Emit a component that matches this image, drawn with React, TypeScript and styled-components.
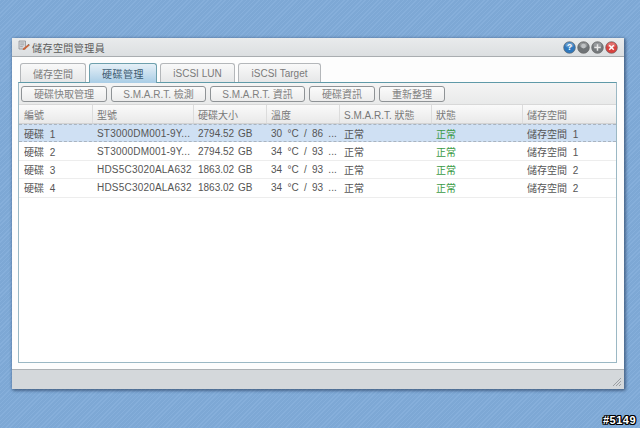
import type { ReactNode } from 'react';
import styled, { createGlobalStyle } from 'styled-components';

const GlobalStyle = createGlobalStyle`
  html, body {
    margin: 0;
    padding: 0;
    height: 100%;
  }

  body {
    font-family: "Liberation Sans", "Noto Sans CJK TC", sans-serif;
    overflow: hidden;
  }
`;

const Desktop = styled.div`
  position: relative;
  box-sizing: border-box;
  width: 640px;
  height: 428px;
  padding: 38px 16px 39px 12px;
  background-color: #80abd9;
  background-image: repeating-linear-gradient(
    135deg,
    rgba(255, 255, 255, 0.05) 0,
    rgba(255, 255, 255, 0.05) 1px,
    rgba(0, 0, 0, 0.02) 1px,
    rgba(0, 0, 0, 0.02) 3px
  );
`;

const Window = styled.div`
  display: flex;
  flex-direction: column;
  height: 100%;
  background: #fff;
  border-radius: 2px;
  box-shadow: 1px 1px 3px 1px rgba(30, 50, 80, 0.55);
`;

const TitleBar = styled.div`
  display: flex;
  align-items: center;
  justify-content: space-between;
  box-sizing: border-box;
  height: 19px;
  padding: 0 6px;
  background: linear-gradient(#e9ebec, #dcdfe1);
  border-bottom: 1px solid #a9adb0;
`;

const Title = styled.div`
  display: flex;
  align-items: flex-start;
  gap: 2px;
  font-size: 10px;
  line-height: 13px;
  letter-spacing: 0.45px;
  color: #5a5a5a;

  span {
    padding-top: 2px;
  }
`;

const WindowButtons = styled.div`
  display: flex;
  gap: 1px;
`;

const Body = styled.div`
  flex: 1;
  min-height: 0;
  display: flex;
  flex-direction: column;
  padding: 6px 7px 6px 6px;
  background: #fdfdfd;
`;

const Tabs = styled.div`
  display: flex;
  gap: 3px;
  height: 19px;
  padding-left: 2px;
`;

const Tab = styled.div<{ $active?: boolean; $width: number }>`
  box-sizing: border-box;
  width: ${p => p.$width}px;
  height: ${p => (p.$active ? 20 : 19)}px;
  display: flex;
  align-items: center;
  justify-content: center;
  font-size: 10px;
  letter-spacing: ${p => (p.$active ? 0.5 : 0)}px;
  color: ${p => (p.$active ? '#3c5a70' : '#7a7a7a')};
  background: ${p =>
    p.$active
      ? 'linear-gradient(#e6f0f7, #a9cde6)'
      : 'linear-gradient(#f9f9f9, #e6e7e8)'};
  border: 1px solid ${p => (p.$active ? '#6ea0ad' : '#b4b7ba')};
  border-bottom: none;
  border-radius: 3px 3px 0 0;
  z-index: ${p => (p.$active ? 1 : 0)};
`;

const Panel = styled.div`
  flex: 1;
  min-height: 0;
  display: flex;
  flex-direction: column;
  background: #fff;
  border: 1px solid #9bb8c4;
  border-top-color: #5f9aa8;
`;

const Toolbar = styled.div`
  display: flex;
  align-items: center;
  gap: 4px;
  box-sizing: border-box;
  height: 22px;
  padding: 0 2px;
  background: linear-gradient(#f4f4f4, #e9eaea);
  border-bottom: 1px solid #d8d8d8;
`;

const ToolButton = styled.div<{ $width: number }>`
  box-sizing: border-box;
  width: ${p => p.$width}px;
  height: 16px;
  display: flex;
  align-items: center;
  justify-content: center;
  font-size: 10px;
  color: #808080;
  background: linear-gradient(#fbfbfb, #ececec);
  border: 1px solid #8f9396;
  border-radius: 3px;
  white-space: nowrap;
`;

const columns = '73px 101px 73px 73px 92px 91px 1fr';

const HeaderRow = styled.div`
  display: grid;
  grid-template-columns: ${columns};
  height: 19px;
  background: linear-gradient(#fafafa, #e9e9e9);
  border-bottom: 1px solid #d2d2d2;
  box-sizing: border-box;
`;

const HeaderCell = styled.div`
  display: flex;
  align-items: center;
  padding-left: 4px;
  font-size: 10px;
  color: #777;
  border-left: 1px solid #dcdcdc;
  white-space: nowrap;

  &:first-child {
    border-left: none;
    padding-left: 5px;
  }
`;

const Row = styled.div<{ $selected?: boolean }>`
  display: grid;
  grid-template-columns: ${columns};
  box-sizing: border-box;
  height: 18.4px;
  background: ${p => (p.$selected ? '#cfe0f3' : '#fff')};
  border-bottom: 1px ${p => (p.$selected ? 'dashed #a9b4c0' : 'solid #ededed')};
  border-top: ${p => (p.$selected ? '1px dashed #a9b4c0' : 'none')};
`;

const Cell = styled.div<{ $ok?: boolean; $wordGap: number; $tracking: number }>`
  display: flex;
  align-items: center;
  padding-left: 5px;
  font-size: 10px;
  letter-spacing: ${p => p.$tracking}px;
  word-spacing: ${p => p.$wordGap}px;
  color: ${p => (p.$ok ? '#3a9a44' : '#555')};
  white-space: pre;
  overflow: hidden;
`;

const Footer = styled.div`
  position: relative;
  height: 20px;
  background: #d4d8db;
  border-top: 1px solid #aeb2b5;
  box-sizing: border-box;
`;

const Grip = styled.svg`
  position: absolute;
  right: 2px;
  bottom: 2px;
`;

const Watermark = styled.div`
  position: absolute;
  right: 4px;
  bottom: 2px;
  font-size: 11px;
  font-weight: bold;
  letter-spacing: 0.5px;
  color: #fff;
  text-shadow:
    1px 0 0 #000,
    -1px 0 0 #000,
    0 1px 0 #000,
    0 -1px 0 #000,
    1px 1px 0 #000,
    -1px -1px 0 #000,
    1px -1px 0 #000,
    -1px 1px 0 #000;
`;

function AppIcon() {
  return (
    <svg width="12" height="11" viewBox="0 0 12 11">
      <path d="M1 1h6.5v8H1z" fill="#d5d8dc" stroke="#85888d" strokeWidth="0.7" />
      <path d="M2.2 3h4M2.2 4.8h4M2.2 6.6h2.6" stroke="#8f9297" strokeWidth="0.7" />
      <path d="M5 8.4l5-3.9 1.2 1.2-4.6 4-1.9.3z" fill="#c8643a" />
      <path d="M10 4.5l.7-.5 1 1-.5.7z" fill="#6d4028" />
    </svg>
  );
}

function CircleButton({ fill, children }: { fill: string; children: ReactNode }) {
  return (
    <svg width="13" height="13" viewBox="0 0 14 14">
      <circle cx="7" cy="7" r="6.3" fill={fill} stroke="#666" strokeWidth="0.7" />
      <ellipse cx="7" cy="4.4" rx="4.4" ry="2.8" fill="#fff" opacity="0.25" />
      {children}
    </svg>
  );
}

const tabs = [
  { label: '儲存空間', width: 66 },
  { label: '硬碟管理', width: 68, active: true },
  { label: 'iSCSI LUN', width: 75 },
  { label: 'iSCSI Target', width: 83 },
];

const buttons = [
  { label: '硬碟快取管理', width: 86 },
  { label: 'S.M.A.R.T. 檢測', width: 95 },
  { label: 'S.M.A.R.T. 資訊', width: 95 },
  { label: '硬碟資訊', width: 66 },
  { label: '重新整理', width: 66 },
];

const headers = ['編號', '型號', '硬碟大小', '溫度', 'S.M.A.R.T. 狀態', '狀態', '儲存空間'];

// word gaps and tracking per column, the numbers sit further from the labels in some
const wordGaps = [3, 0, 1, 2.5, 0, 0, 3];
const trackings = [0, 0.2, 0, 0, 0, 0, 0];

const disks = [
  ['硬碟 1', 'ST3000DM001-9Y...', '2794.52 GB', '30 °C / 86 ...', '正常', '正常', '儲存空間 1'],
  ['硬碟 2', 'ST3000DM001-9Y...', '2794.52 GB', '34 °C / 93 ...', '正常', '正常', '儲存空間 1'],
  ['硬碟 3', 'HDS5C3020ALA632', '1863.02 GB', '34 °C / 93 ...', '正常', '正常', '儲存空間 2'],
  ['硬碟 4', 'HDS5C3020ALA632', '1863.02 GB', '34 °C / 93 ...', '正常', '正常', '儲存空間 2'],
];

export default function App() {
  return (
    <Desktop>
      <GlobalStyle />
      <Window>
        <TitleBar>
          <Title>
            <AppIcon />
            <span>儲存空間管理員</span>
          </Title>
          <WindowButtons>
            <CircleButton fill="#2f78bd">
              <text x="7" y="10.2" fontSize="9" fontWeight="bold" textAnchor="middle" fill="#fff">?</text>
            </CircleButton>
            <CircleButton fill="#6f7376">
              <circle cx="7" cy="5.5" r="2.6" fill="#bfc2c4" />
            </CircleButton>
            <CircleButton fill="#75797c">
              <path d="M7 3.5v7M3.5 7h7" stroke="#e8e8e8" strokeWidth="1.6" />
            </CircleButton>
            <CircleButton fill="#d9423f">
              <path d="M4.6 4.6l4.8 4.8M9.4 4.6l-4.8 4.8" stroke="#fff" strokeWidth="1.6" />
            </CircleButton>
          </WindowButtons>
        </TitleBar>
        <Body>
          <Tabs>
            {tabs.map(t => (
              <Tab key={t.label} $active={t.active} $width={t.width}>
                {t.label}
              </Tab>
            ))}
          </Tabs>
          <Panel>
            <Toolbar>
              {buttons.map(b => (
                <ToolButton key={b.label} $width={b.width}>
                  {b.label}
                </ToolButton>
              ))}
            </Toolbar>
            <HeaderRow>
              {headers.map(h => (
                <HeaderCell key={h}>{h}</HeaderCell>
              ))}
            </HeaderRow>
            {disks.map((d, i) => (
              <Row key={d[0]} $selected={i === 0}>
                {d.map((c, j) => (
                  <Cell key={j} $ok={j === 5} $wordGap={wordGaps[j]} $tracking={trackings[j]}>
                    {c}
                  </Cell>
                ))}
              </Row>
            ))}
          </Panel>
        </Body>
        <Footer>
          <Grip width="10" height="10" viewBox="0 0 10 10">
            <path d="M1 9l8-8M4 9l5-5M7 9l2-2" stroke="#8d9194" strokeWidth="0.8" />
          </Grip>
        </Footer>
      </Window>
      <Watermark>#5149</Watermark>
    </Desktop>
  );
}
